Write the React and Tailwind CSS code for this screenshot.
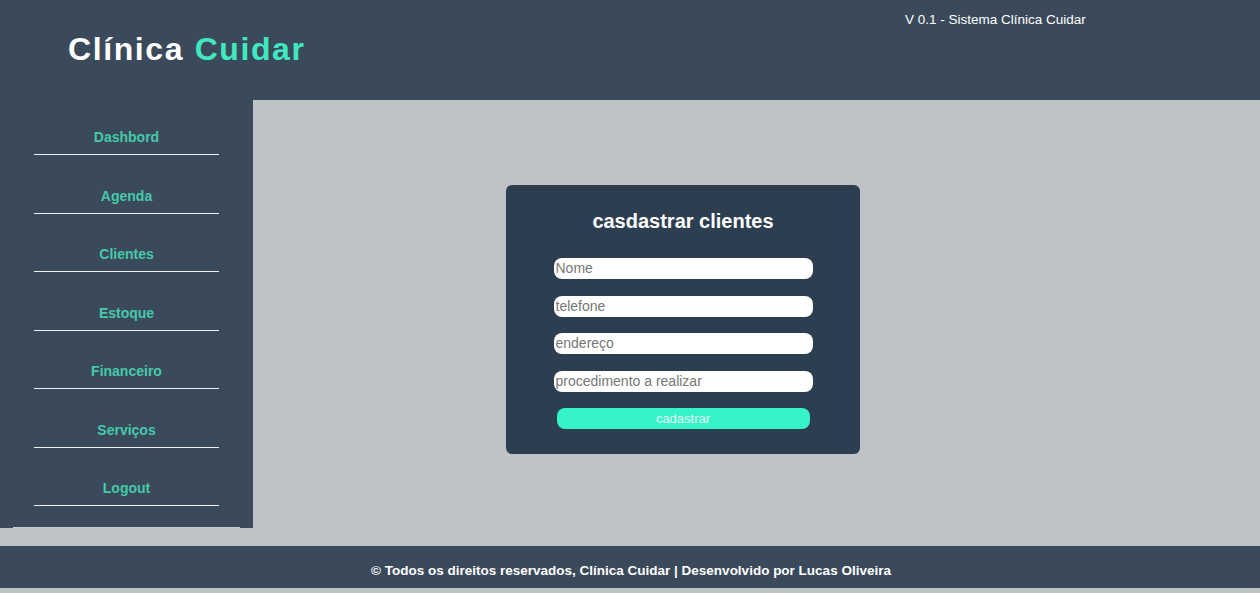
const menu = ["Dashbord", "Agenda", "Clientes", "Estoque", "Financeiro", "Serviços", "Logout"];

const fields = ["Nome", "telefone", "endereço", "procedimento a realizar"];

function Sidebar() {
  return (
    <aside className="w-[253px] shrink-0 self-start bg-[#3b4a5b] pl-[13px] pr-[13px]">
      <nav className="flex flex-col gap-[30.5px] border-b border-[#c8cdd2] pt-[27px] pb-[21px]">
        {menu.map((item) => (
          <a
            key={item}
            href="#"
            className="mx-auto block w-[185px] border-b border-[#eef0f2] pb-[7px] text-center text-[14px] leading-5 font-bold text-[#45c9a9]"
          >
            {item}
          </a>
        ))}
      </nav>
    </aside>
  );
}

function ClientForm() {
  return (
    <div className="flex h-[269px] w-[354px] flex-col items-center rounded-md bg-[#2c3e50] pt-[25px]">
      <h2 className="text-[20px] leading-[23px] font-bold text-white">casdastrar clientes</h2>
      <form className="mt-[25px] flex flex-col items-center" onSubmit={(e) => e.preventDefault()}>
        {fields.map((f) => (
          <input
            key={f}
            type="text"
            placeholder={f}
            className="mb-[16.5px] h-[21px] w-[259px] rounded-lg bg-white px-[2px] text-[14px] text-[#333] outline-none placeholder:text-[#777]"
          />
        ))}
        <button
          type="submit"
          className="-mt-[0.5px] h-[21px] w-[253px] rounded-lg bg-[#35f3c8] text-[13px] leading-[21px] text-[#e6fbf5]"
        >
          cadastrar
        </button>
      </form>
    </div>
  );
}

export default function App() {
  return (
    <div className="min-h-screen bg-[#bdc3c7] font-['Liberation_Sans',Arial,sans-serif]">
      <header className="flex h-[100px] bg-[#3b4a5b]">
        <div className="w-[905px] pl-[68px] pt-[33px]">
          <h1 className="text-[32px] leading-none font-bold tracking-[1.6px] text-white">
            Clínica <span className="text-[#40e8c0]">Cuidar</span>
          </h1>
        </div>
        <div className="pt-[13px] text-[13.5px] leading-none text-white">V 0.1 - Sistema Clínica Cuidar</div>
      </header>

      <div className="flex h-[446px]">
        <Sidebar />
        <main className="flex-1 pl-[253px] pt-[85px]">
          <ClientForm />
        </main>
      </div>

      <footer className="flex h-[42px] justify-center bg-[#3b4a5b] pt-[17px] pl-[2px]">
        <p className="text-[13.5px] leading-[16px] font-bold text-white">
          © Todos os direitos reservados, Clínica Cuidar | Desenvolvido por Lucas Oliveira
        </p>
      </footer>
    </div>
  );
}
